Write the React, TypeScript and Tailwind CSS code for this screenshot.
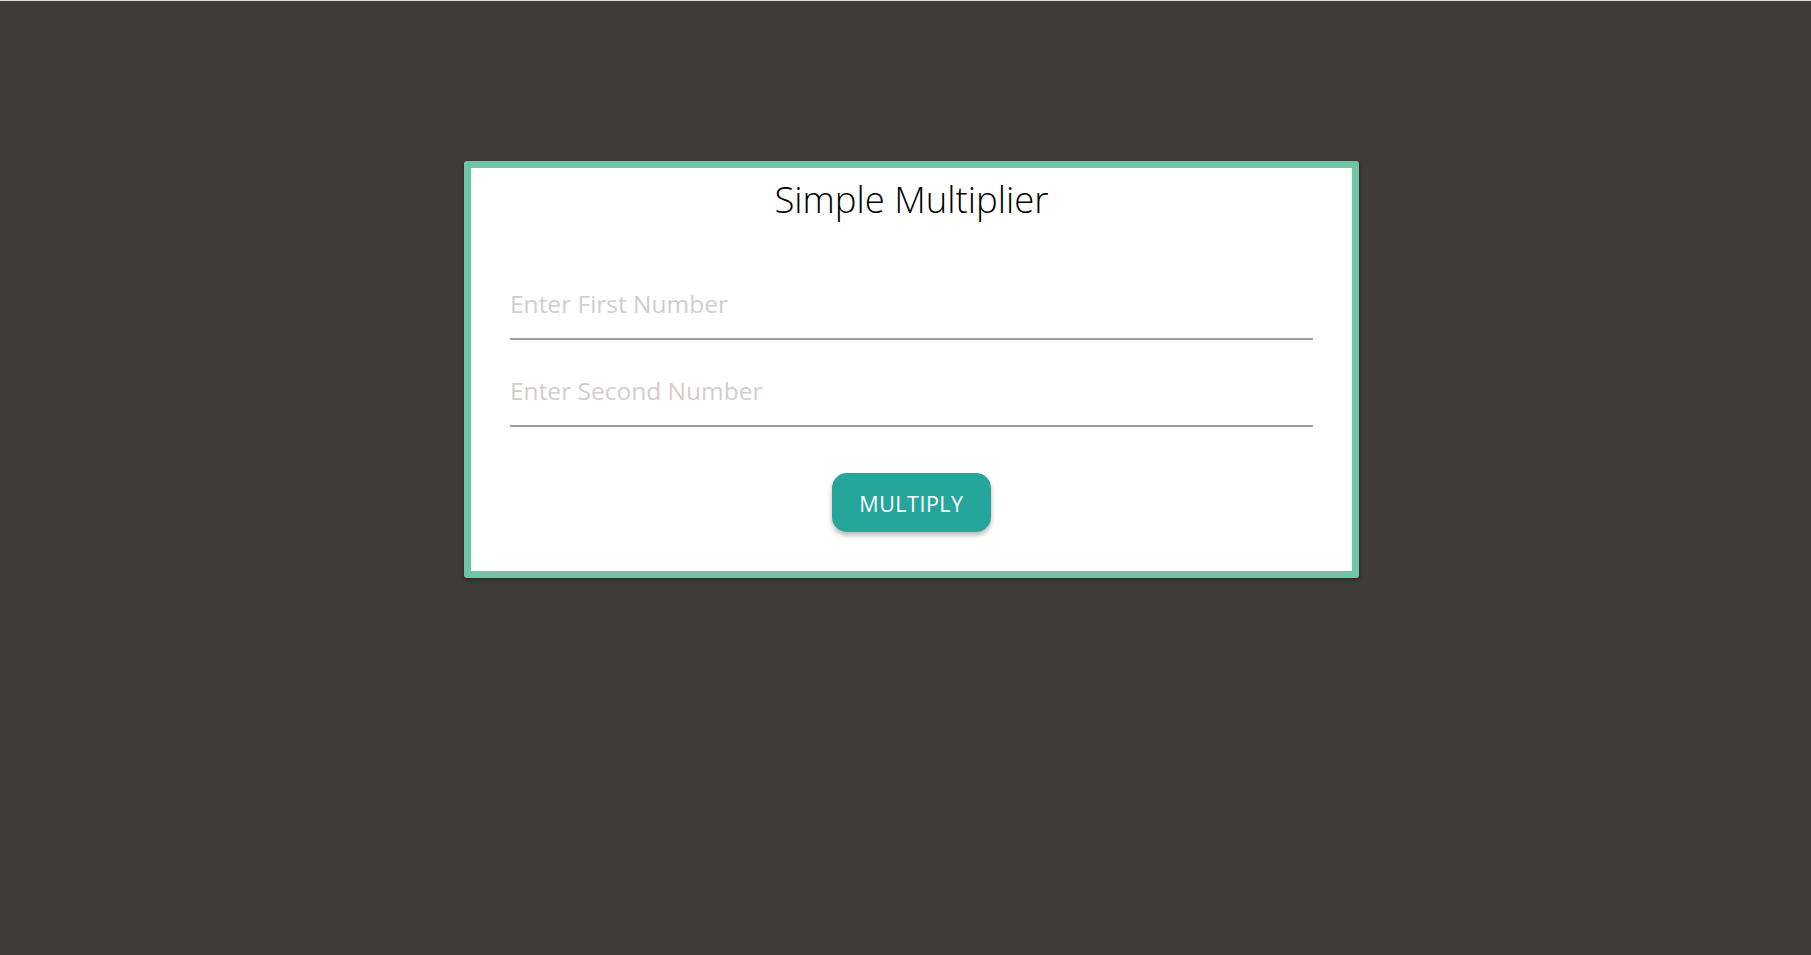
export default function App() {
  return (
    <div className="min-h-[955px] w-full bg-[#3f3b3a] border-t border-[#dedede] pt-[160px] font-['Open_Sans',sans-serif]">
      <div className="ml-[464px] w-[895px] h-[417px] rounded-[3px] border-[7px] border-[#70c5a6] bg-white shadow-[0_2px_4px_rgba(0,0,0,0.35)]">
        <h1 className="text-center text-[36.5px] leading-[48px] pt-[7px] font-light text-black">
          Simple Multiplier
        </h1>
        <div className="px-[39px] pt-[46px]">
          <input
            type="text"
            placeholder="Enter First Number"
            className="block w-[803px] h-[71px] border-b-2 border-[#9e9e9e] bg-transparent text-[24.5px] text-black outline-none placeholder:text-[#d3cdcc]"
          />
          <input
            type="text"
            placeholder="Enter Second Number"
            className="block w-[803px] h-[71px] mt-[16px] border-b-2 border-[#9e9e9e] bg-transparent text-[24.5px] text-black outline-none placeholder:text-[#d3cdcc]"
          />
        </div>
        <div className="flex justify-center pt-[46px]">
          <button className="w-[159px] h-[59px] pt-[3px] rounded-[15px] bg-[#26a69a] text-white text-[21.5px] tracking-[0.5px] uppercase shadow-[0_3px_5px_rgba(0,0,0,0.3)]">
            Multiply
          </button>
        </div>
      </div>
    </div>
  );
}
